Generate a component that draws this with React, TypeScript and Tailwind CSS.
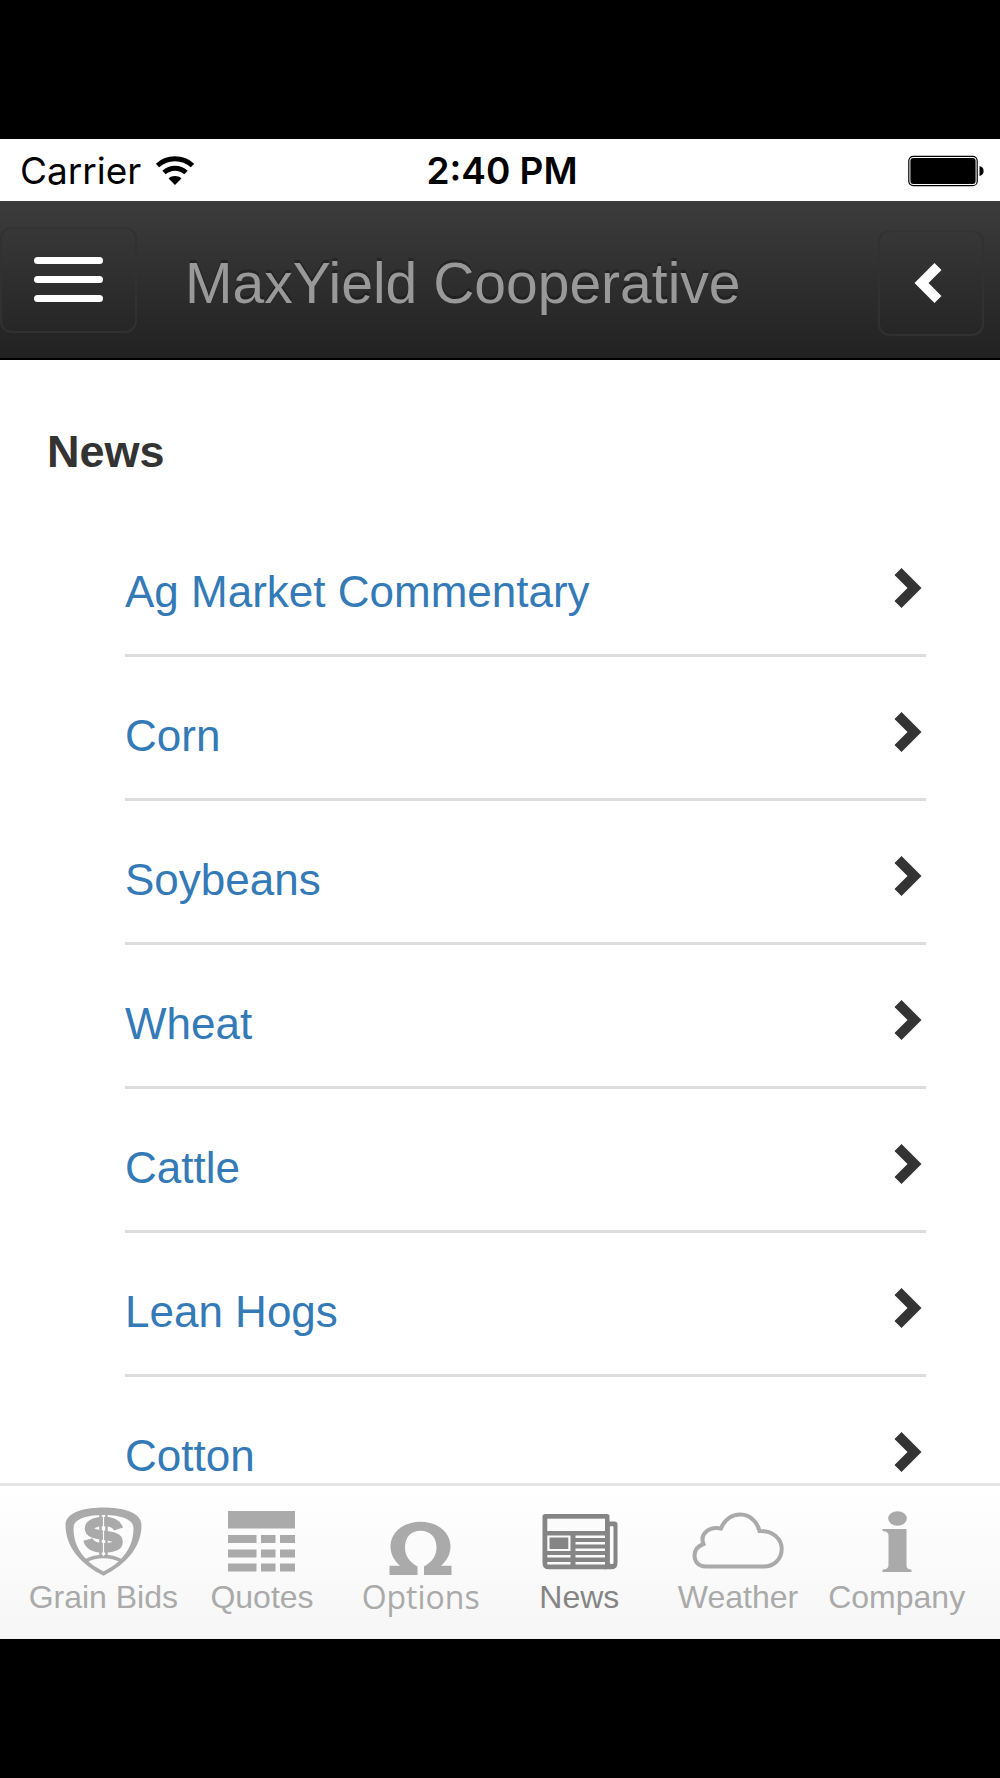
import { useState } from 'react'
import type { ReactNode } from 'react'

const topics = ['Ag Market Commentary', 'Corn', 'Soybeans', 'Wheat', 'Cattle', 'Lean Hogs', 'Cotton']

function WifiIcon() {
  return (
    <svg width="40" height="30" viewBox="0 0 40 30" fill="none" stroke="currentColor" strokeWidth="5" aria-hidden="true">
      <path d="M2.5 9.5C12.5 .6 27.500 .6 37.500 9.5" />
      <path d="M9 16.500C15.500 10.700 24.500 10.700 31 16.500" />
      <path d="M20 29 13.600 22.500C17 19.300 23 19.300 26.400 22.500Z" fill="currentColor" stroke="none" />
    </svg>
  )
}

function BatteryIcon() {
  return (
    <svg width="76" height="32" viewBox="0 0 76 32" aria-hidden="true">
      <rect x=".8" y="1.300" width="68.400" height="29.400" rx="4.500" fill="none" stroke="#000" strokeWidth="1.200" />
      <rect x="2.400" y="2.900" width="65.200" height="26.200" rx="3" />
      <path d="M71.500 11C77 12 77 20 71.500 21Z" />
    </svg>
  )
}

function Chevron({ className }: { className?: string }) {
  return (
    <svg width="28" height="40" viewBox="0 0 28 40" fill="currentColor" className={className} aria-hidden="true">
      <path d="M7.500 0 27.500 20 7.500 40 .5 33 13.500 20 .5 7Z" />
    </svg>
  )
}

// All tab icons share one 92x72 box so the labels line up
function TabIcon({ children }: { children: ReactNode }) {
  return (
    <svg width="92" height="72" viewBox="0 0 92 72" fill="currentColor" aria-hidden="true">
      {children}
    </svg>
  )
}

const shield = (
  <TabIcon>
    <path
      fillRule="evenodd"
      d="M46.500 1.500C62 1.500 84.500 5 84.500 19C84.500 42 68 59 46.500 69.700C25 59 8.500 42 8.500 19C8.500 5 31 1.500 46.500 1.500ZM46.500 9C33 9 16.500 12 16.500 22C16.500 35 21 45 30 54C34.500 58.500 40 62 46.500 65.500C53 62 58.500 58.500 63 54C72 45 76.500 35 76.500 22C76.500 12 60 9 46.500 9Z"
    />
    <path d="M29 54.500C39 49 54 49 64 54.500" fill="none" stroke="currentColor" strokeWidth="3.500" />
    <path
      d="M61.500 23C59.500 17 53 15.500 46.500 15.500C38 15.500 32.500 18.500 32.500 22.500C32.500 27 38 28 46.500 29.300C56 30.700 61 31.500 61 36C61 40.500 54.500 41.800 46.500 41.800C38.500 41.800 32.500 39.500 31 33.500"
      fill="none"
      stroke="currentColor"
      strokeWidth="9.500"
    />
    <path d="M43.500 8V51M49.500 8V51" fill="none" stroke="currentColor" strokeWidth="2.500" />
    <path d="M46.500 9V50" fill="none" stroke="#fcfcfc" strokeWidth="1.200" />
  </TabIcon>
)

const table = (
  <TabIcon>
    <rect x="12" y="5" width="67" height="17.500" />
    {[29, 43.5, 57.5].map((y) => (
      <g key={y}>
        <rect x="12" y={y} width="28.500" height="8" />
        <rect x="45" y={y} width="14.500" height="8" />
        <rect x="64" y={y} width="15" height="8" />
      </g>
    ))}
  </TabIcon>
)

const omega = (
  <TabIcon>
    <path d="M14.500 59.700H25C19 54.500 15.500 48 15.500 40.500C15.500 26.500 28 15.700 45.500 15.700S75.500 26.500 75.500 40.500C75.500 48 72 54.500 66 59.700H76.500V69H49V60.500C57 56 61.500 50 61.500 41.500C61.500 31 55 24.700 45.500 24.700S30 31 30 41.500C30 50 34.500 56 42.500 60.500V69H14.500Z" />
  </TabIcon>
)

const newspaper = (
  <TabIcon>
    <path d="M73 15.500H81.500Q84.500 15.500 84.500 18.500V57Q84.500 63.300 78 63.300H71Z" />
    <rect x="76.800" y="20" width="3.700" height="38" rx="1.500" fill="#fbfbfb" />
    <path d="M12 8H74Q76.500 8 76.500 10.500V60L73 63.300H16Q9.500 63.300 9.500 57V10.500Q9.500 8 12 8Z" />
    <g fill="#fbfbfb">
      <rect x="14.300" y="12.700" width="57.700" height="12.300" />
      <path fillRule="evenodd" d="M14.300 29.500H37.500V45H14.300ZM16.500 31.500V43H35.300V31.500Z" />
      <rect x="14.300" y="49" width="23.200" height="2.500" />
      <rect x="14.300" y="56" width="23.200" height="2.500" />
      {[29.5, 36, 42.5, 49, 56].map((y) => (
        <rect key={y} x="42.500" y={y} width="29.500" height="2.500" />
      ))}
    </g>
  </TabIcon>
)

const cloud = (
  <TabIcon>
    <path
      d="M14 60.500C6 60.500 2.500 55 2.500 49.500C2.500 44 6 40 11.500 38C7.500 28 17 20 29 22.500C36 3.500 62 3.500 67.500 25C81 24.500 89.700 33 89.700 43C89.700 53 82 60.500 72 60.500Z"
      fill="none"
      stroke="currentColor"
      strokeWidth="4"
    />
  </TabIcon>
)

const info = (
  <TabIcon>
    <ellipse cx="46.500" cy="12.500" rx="9.300" ry="7.300" />
    <path d="M31.500 23H55.500V59C55.500 62.500 57.500 63.500 60.500 63.700V66H31.500V63.700C35.500 63.500 37.500 62 37.500 59V30C37.500 26.500 35.500 25.300 31.500 25Z" />
  </TabIcon>
)

const tabs = [
  { name: 'Grain Bids', icon: shield },
  { name: 'Quotes', icon: table },
  { name: 'Options', icon: omega, font: "[font-family:'Open_Sans',sans-serif]" },
  { name: 'News', icon: newspaper },
  { name: 'Weather', icon: cloud },
  { name: 'Company', icon: info },
]

export default function App() {
  const [active, setActive] = useState('News')

  return (
    <div className="flex h-screen flex-col bg-black py-[139px] [font-family:'Liberation_Sans',Arial,sans-serif]">
      {/* Status bar */}
      <div className="grid h-[62px] shrink-0 grid-cols-[1fr_auto_1fr] items-center bg-white pl-5 pr-4 pt-0.5 text-[37px] text-black [font-family:Inter,sans-serif]">
        <div className="flex items-center gap-3.5">
          <span>Carrier</span>
          <WifiIcon />
        </div>
        <span className="font-semibold">2:40 PM</span>
        <div className="flex justify-end">
          <BatteryIcon />
        </div>
      </div>

      {/* Title bar */}
      <header className="flex h-[159px] shrink-0 items-center gap-12 border-b-2 border-black bg-linear-to-b from-[#3c3c3c] to-[#222222] pr-4">
        <button
          type="button"
          aria-label="Menu"
          className="flex h-[106px] w-[137px] flex-col items-center justify-center gap-3 rounded-xl border-2 border-[#313131] border-t-[#333333]"
        >
          <span className="h-[7px] w-[69px] rounded-sm bg-white" />
          <span className="h-[7px] w-[69px] rounded-sm bg-white" />
          <span className="h-[7px] w-[69px] rounded-sm bg-white" />
        </button>
        <h1 className="mt-1.5 flex-1 whitespace-nowrap text-[57px] leading-[64px] text-[#999999] [text-shadow:0_-3px_0_#00000040]">
          MaxYield Cooperative
        </h1>
        <button
          type="button"
          aria-label="Back"
          className="mt-1.5 flex h-[106px] w-[106px] items-center justify-center rounded-xl border-2 border-[#313131] border-t-[#333333] pr-1.5 text-white"
        >
          <Chevron className="rotate-180" />
        </button>
      </header>

      <main className="min-h-0 flex-1 overflow-hidden bg-white pt-[68px]">
        <h2 className="pl-[47px] text-[45px] font-bold leading-[48px] text-[#333333]">News</h2>
        <ul className="ml-[125px] mr-[74px] mt-[37px]">
          {topics.map((topic) => (
            <li key={topic} className="border-b-[3px] border-[#dddddd]">
              <a href="#" className="flex items-start justify-between pb-[38px] pr-1 pt-[55px]">
                <span className="text-[44px] leading-[48px] text-[#337ab7]">{topic}</span>
                <Chevron className="text-[#333333]" />
              </a>
            </li>
          ))}
        </ul>
      </main>

      {/* Bottom tabs */}
      <nav className="grid shrink-0 grid-cols-6 border-t-[3px] border-[#e5e5e5] bg-linear-to-b from-white to-[#f6f6f6] px-6 pb-[23px] pt-5">
        {tabs.map((tab) => (
          <button
            key={tab.name}
            type="button"
            onClick={() => setActive(tab.name)}
            className={`flex flex-col items-center ${active === tab.name ? 'text-[#858585]' : 'text-[#aaaaaa]'}`}
          >
            {tab.icon}
            <span className={`whitespace-nowrap text-[32px] leading-[38px] ${tab.font ?? ''}`}>{tab.name}</span>
          </button>
        ))}
      </nav>
    </div>
  )
}
